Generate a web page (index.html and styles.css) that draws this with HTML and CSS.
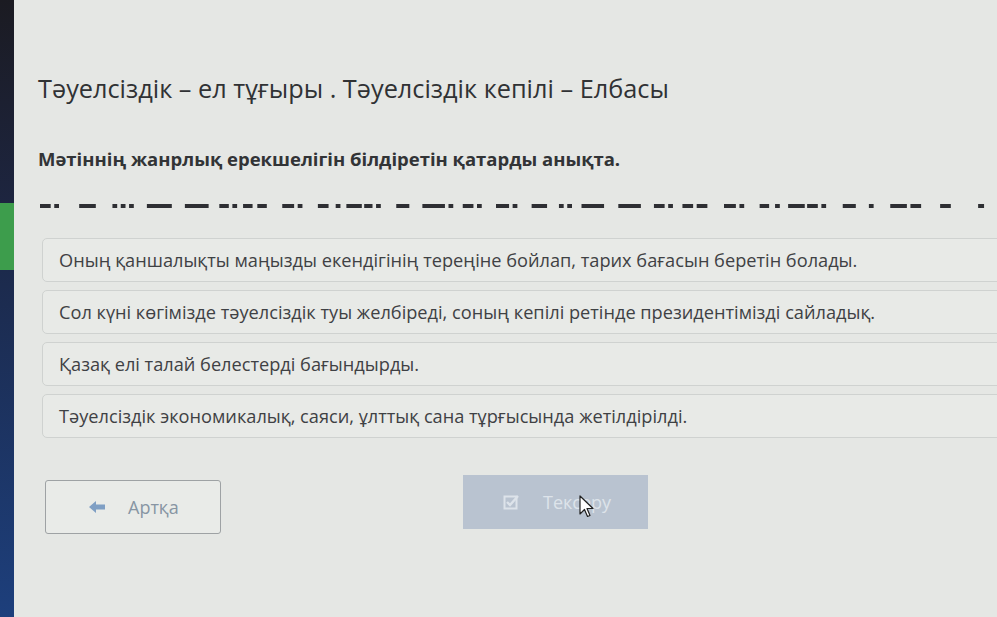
FILE: index.html
```html
<!DOCTYPE html>
<html lang="kk">
<head>
    <meta charset="UTF-8">
    <meta name="viewport" content="width=device-width, initial-scale=1.0">
    <title>Тәуелсіздік – ел тұғыры</title>
    <link rel="stylesheet" href="styles.css">
</head>
<body>
<div class="screen">
    <div class="side-strip">
        <div class="strip-top"></div>
        <div class="strip-active"></div>
        <div class="strip-bottom"></div>
    </div>

    <div class="main-content">
        <h1 class="lesson-title">Тәуелсіздік – ел тұғыры . Тәуелсіздік кепілі – Елбасы</h1>
        <h2 class="task-question">Мәтіннің жанрлық ерекшелігін білдіретін қатарды анықта.</h2>

        <!-- gaps to be filled -->
        <svg class="blank-line" width="950" height="4" viewBox="0 0 800 4" preserveAspectRatio="none">
            <g fill="#2e2f33">
                <rect x="0" y="0" width="9" height="4"/><rect x="12" y="0" width="4" height="4"/>
                <rect x="33" y="0" width="14" height="4"/>
                <rect x="61" y="0" width="4" height="4"/><rect x="68" y="0" width="4" height="4"/><rect x="75" y="0" width="4" height="4"/>
                <rect x="90" y="0" width="21" height="4"/>
                <rect x="122" y="0" width="20" height="4"/>
                <rect x="151" y="0" width="8" height="4"/><rect x="162" y="0" width="4" height="4"/><rect x="171" y="0" width="8" height="4"/><rect x="183" y="0" width="8" height="4"/>
                <rect x="204" y="0" width="10" height="4"/><rect x="217" y="0" width="4" height="4"/>
                <rect x="234" y="0" width="9" height="4"/><rect x="249" y="0" width="4" height="4"/><rect x="258" y="0" width="13" height="4"/><rect x="273" y="0" width="7" height="4"/><rect x="283" y="0" width="4" height="4"/>
                <rect x="300" y="0" width="11" height="4"/>
                <rect x="322" y="0" width="19" height="4"/><rect x="344" y="0" width="4" height="4"/>
                <rect x="356" y="0" width="9" height="4"/><rect x="368" y="0" width="4" height="4"/>
                <rect x="384" y="0" width="11" height="4"/><rect x="398" y="0" width="4" height="4"/>
                <rect x="414" y="0" width="13" height="4"/>
                <rect x="437" y="0" width="4" height="4"/><rect x="444" y="0" width="4" height="4"/>
                <rect x="456" y="0" width="19" height="4"/>
                <rect x="487" y="0" width="19" height="4"/>
                <rect x="517" y="0" width="9" height="4"/><rect x="529" y="0" width="4" height="4"/>
                <rect x="541" y="0" width="9" height="4"/><rect x="553" y="0" width="9" height="4"/>
                <rect x="576" y="0" width="10" height="4"/><rect x="589" y="0" width="4" height="4"/>
                <rect x="606" y="0" width="8" height="4"/><rect x="619" y="0" width="4" height="4"/>
                <rect x="630" y="0" width="14" height="4"/><rect x="646" y="0" width="9" height="4"/><rect x="658" y="0" width="4" height="4"/>
                <rect x="676" y="0" width="11" height="4"/>
                <rect x="698" y="0" width="4" height="4"/>
                <rect x="716" y="0" width="14" height="4"/><rect x="733" y="0" width="9" height="4"/>
                <rect x="758" y="0" width="9" height="4"/>
                <rect x="790" y="0" width="5" height="4"/>
            </g>
        </svg>

        <div class="answer-list">
            <div class="answer-card">Оның қаншалықты маңызды екендігінің тереңіне бойлап, тарих бағасын беретін болады.</div>
            <div class="answer-card">Сол күні көгімізде тәуелсіздік туы желбіреді, соның кепілі ретінде президентімізді сайладық.</div>
            <div class="answer-card">Қазақ елі талай белестерді бағындырды.</div>
            <div class="answer-card">Тәуелсіздік экономикалық, саяси, ұлттық сана тұрғысында жетілдірілді.</div>
        </div>

        <div class="nav-buttons">
            <button class="back-btn">
                <svg class="btn-icon" width="18" height="14" viewBox="0 0 18 14">
                    <path d="M1 7 L8 1 L8 4.5 L17 4.5 L17 9.5 L8 9.5 L8 13 Z" fill="#7f9fc4"/>
                </svg>
                Артқа
            </button>
            <div class="check-wrap">
                <button class="check-btn" disabled>
                    <svg class="btn-icon" width="16" height="16" viewBox="0 0 16 16">
                        <rect x="1.5" y="2.5" width="12" height="12" fill="none" stroke="#dde3ea" stroke-width="2"/>
                        <path d="M4 8 L7 11 L15 2" fill="none" stroke="#dde3ea" stroke-width="2.4"/>
                    </svg>
                    Тексеру
                </button>
                <svg class="cursor" width="16" height="24" viewBox="0 0 16 24">
                    <path d="M1 1 L1 19 L5.5 14.5 L8.5 21.5 L11 20.5 L8 13.5 L14 13.5 Z" fill="#fff" stroke="#222" stroke-width="1.2" stroke-linejoin="round"/>
                </svg>
            </div>
        </div>
    </div>
</div>
</body>
</html>
```

FILE: styles.css
```css
body {
    margin: 0;
    padding: 0;
    font-family: "Open Sans", "Noto Sans", sans-serif;
    background-color: #e5e7e4;
    overflow: hidden;
}

.screen {
    display: flex;
    width: 997px;
    height: 617px;
}

/* Left dark strip of the app menu */
.side-strip {
    width: 14px;
    flex-shrink: 0;
    display: flex;
    flex-direction: column;
}

.strip-top {
    height: 203px;
    background: linear-gradient(#1b1b22, #1d2540);
}

.strip-active {
    height: 67px;
    background-color: #3d9d4c;
}

.strip-bottom {
    flex: 1;
    background: linear-gradient(#1c2a4c, #1d3f7c);
}

/* Main Content */
.main-content {
    flex: 1;
    padding-left: 24px;
    min-width: 0;
}

.lesson-title {
    font-size: 25.3px;
    font-weight: normal;
    color: #303234;
    margin: 70px 0 0 0;
    line-height: 36px;
    white-space: nowrap;
}

.task-question {
    font-size: 18.5px;
    font-weight: bold;
    color: #323436;
    margin: 41px 0 0 0;
    line-height: 24px;
    white-space: nowrap;
}

.blank-line {
    display: block;
    margin: 33px 0 0 2px;
}

.answer-list {
    display: flex;
    flex-direction: column;
    gap: 8px;
    margin-top: 30px;
    margin-left: 4px;
    width: 1000px;
}

.answer-card {
    height: 44px;
    box-sizing: border-box;
    display: flex;
    align-items: center;
    padding-left: 16px;
    border: 1px solid #cfd2d0;
    border-radius: 5px;
    background-color: #e8eae7;
    font-size: 18.2px;
    color: #3f4144;
    white-space: nowrap;
}

.nav-buttons {
    display: flex;
    align-items: flex-start;
    margin-top: 37px;
    margin-left: 7px;
}

.back-btn {
    width: 176px;
    height: 54px;
    display: flex;
    align-items: center;
    gap: 22px;
    padding-left: 42px;
    border: 1px solid #9ea2a4;
    border-radius: 3px;
    background-color: #e9ebe8;
    color: #8795a3;
    font-family: inherit;
    font-size: 18px;
    margin-top: 5px;
}

.check-wrap {
    position: relative;
    margin-left: 242px;
}

.check-btn {
    width: 185px;
    height: 54px;
    display: flex;
    align-items: center;
    gap: 24px;
    padding-left: 40px;
    border: none;
    background-color: #b9c3d0;
    color: #dde3ea;
    font-family: inherit;
    font-size: 18px;
}

.cursor {
    position: absolute;
    left: 116px;
    top: 20px;
}
```
